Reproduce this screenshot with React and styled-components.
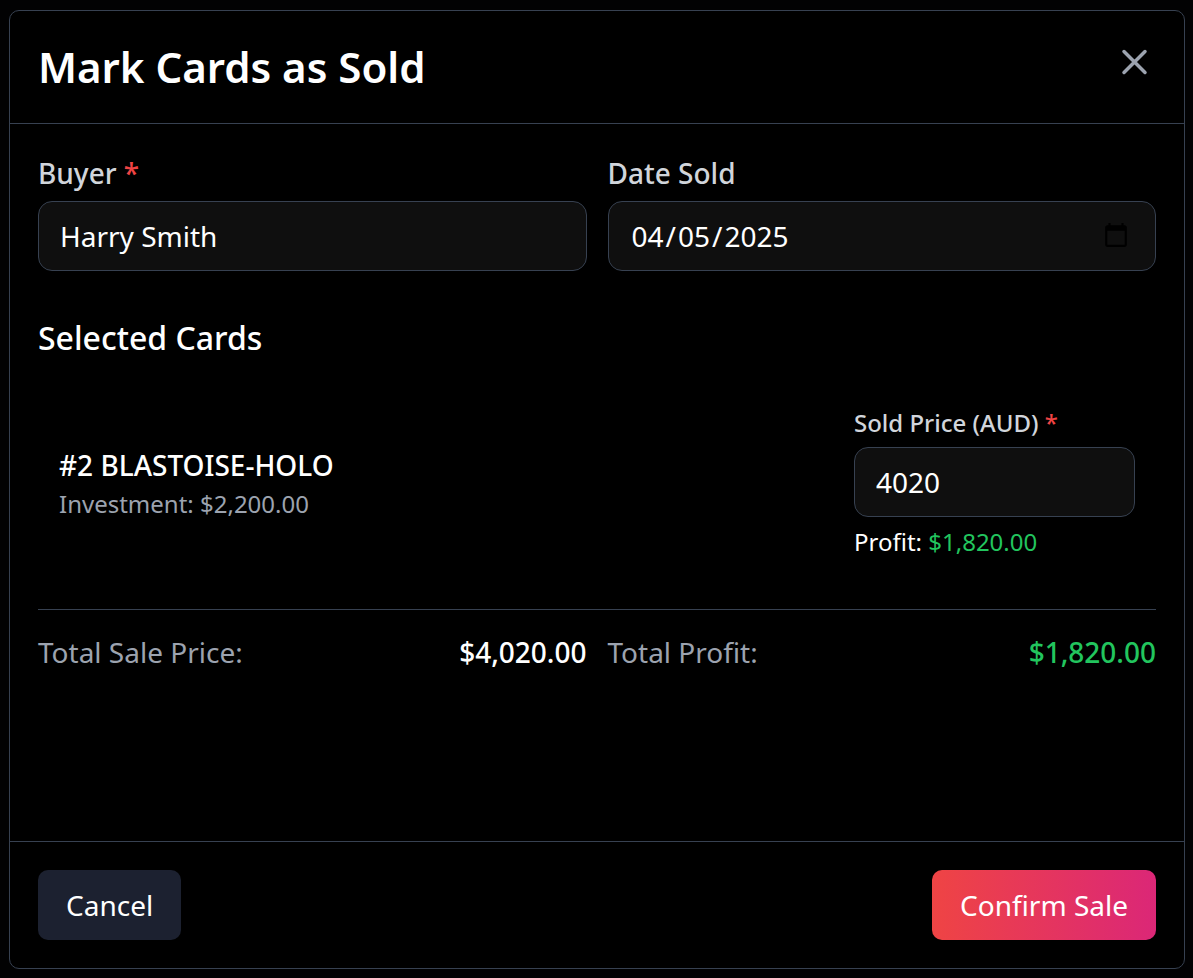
import React, { useState } from "react";
import styled, { createGlobalStyle } from "styled-components";

const GlobalStyle = createGlobalStyle`
  *, *::before, *::after { box-sizing: border-box; }
  html, body, #root { height: 100%; }
  body {
    margin: 0;
    background: #020203;
    color: #fff;
    font-family: "Noto Sans", sans-serif;
    font-size: 28px;
    line-height: 42px;
  }
  h2, h3, p, dl, dt, dd { margin: 0; }
  button, input { font: inherit; color: inherit; }
`;

const Page = styled.main`
  min-height: 100%;
  display: flex;
  padding: 10px 8px 9px 9px;
`;

const Dialog = styled.form`
  flex: 1;
  min-width: 0;
  display: flex;
  flex-direction: column;
  background: #000;
  border: 1px solid #374151;
  border-radius: 10px;
`;

const Header = styled.header`
  display: flex;
  justify-content: space-between;
  align-items: flex-start;
  padding: 28px;
  border-bottom: 1px solid #374151;
`;

const Title = styled.h2`
  font-size: 42px;
  line-height: 56px;
  font-weight: 600;
`;

const CloseButton = styled.button`
  display: flex;
  padding: 2px 0;
  border: 0;
  background: none;
  color: #9ca3af;
  cursor: pointer;
`;

const Body = styled.div`
  flex: 1;
  display: flex;
  flex-direction: column;
  padding: 28px;
`;

const Columns = styled.div`
  display: grid;
  grid-template-columns: 1fr 1fr;
  gap: 21px;
`;

const Field = styled.div`
  display: flex;
  flex-direction: column;
`;

const Label = styled.label`
  color: #d1d5db;
  font-size: ${(p) => (p.$small ? "24px" : "28px")};
  line-height: ${(p) => (p.$small ? "35px" : "42px")};
  font-weight: 500;
  margin-bottom: 7px;
`;

const Required = styled.span`
  color: #ef4444;
`;

const Input = styled.input`
  width: 100%;
  height: 70px;
  padding: 0 21px;
  border: 1px solid #374151;
  border-radius: 14px;
  background: #0f0f0f;
  outline: none;
`;

const DateInput = styled(Input)`
  &::-webkit-datetime-edit-month-field,
  &::-webkit-datetime-edit-day-field,
  &::-webkit-datetime-edit-year-field {
    padding: 0 2px;
  }
  &::-webkit-calendar-picker-indicator {
    margin-right: 2px;
  }
`;

const SectionTitle = styled.h3`
  margin-top: 42px;
  font-size: 32px;
  line-height: 50px;
  font-weight: 500;
`;

const CardRow = styled.article`
  display: flex;
  justify-content: space-between;
  align-items: center;
  margin-top: 21px;
  padding: 21px;
`;

const CardName = styled.p`
  font-weight: 500;
`;

const Investment = styled.p`
  color: #9ca3af;
  font-size: 24px;
  line-height: 35px;
`;

const PriceColumn = styled.div`
  width: 281px;
`;

const Profit = styled.p`
  margin-top: 7px;
  font-size: 24px;
  line-height: 36px;
`;

const Gain = styled.span`
  color: #22c55e;
`;

const Totals = styled.dl`
  display: grid;
  grid-template-columns: 1fr 1fr;
  gap: 21px;
  margin-top: 28px;
  padding-top: 21px;
  border-top: 1px solid #374151;
`;

const Total = styled.div`
  display: flex;
  justify-content: space-between;
  dt { color: #9ca3af; }
  dd { font-weight: 500; }
`;

const Footer = styled.footer`
  display: flex;
  justify-content: space-between;
  padding: 28px;
  border-top: 1px solid #374151;
`;

const Button = styled.button`
  height: 70px;
  padding: 0 28px;
  border: 0;
  border-radius: 10px;
  background: ${(p) => (p.$primary ? "linear-gradient(to right, #ef4444, #db2777)" : "#1c2130")};
  cursor: pointer;
`;

export default function App() {
  const [buyer, setBuyer] = useState("Harry Smith");
  const [date, setDate] = useState("2025-04-05");
  const [price, setPrice] = useState("4020");
  return (
    <>
      <GlobalStyle />
      <Page>
        <Dialog role="dialog" aria-labelledby="title" onSubmit={(e) => e.preventDefault()}>
          <Header>
            <Title id="title">Mark Cards as Sold</Title>
            <CloseButton type="button" aria-label="Close">
              <svg width="42" height="42" viewBox="0 0 42 42" fill="none" stroke="currentColor" strokeWidth="3.5" strokeLinecap="round">
                <path d="M10 10.5l21 21M31 10.5l-21 21" />
              </svg>
            </CloseButton>
          </Header>
          <Body>
            <Columns>
              <Field>
                <Label htmlFor="buyer">Buyer <Required>*</Required></Label>
                <Input id="buyer" value={buyer} onChange={(e) => setBuyer(e.target.value)} />
              </Field>
              <Field>
                <Label htmlFor="date">Date Sold</Label>
                <DateInput id="date" type="date" value={date} onChange={(e) => setDate(e.target.value)} />
              </Field>
            </Columns>
            <SectionTitle>Selected Cards</SectionTitle>
            <CardRow>
              <div>
                <CardName>#2 BLASTOISE-HOLO</CardName>
                <Investment>Investment: $2,200.00</Investment>
              </div>
              <PriceColumn>
                <Field>
                  <Label $small htmlFor="price">Sold Price (AUD) <Required>*</Required></Label>
                  <Input id="price" inputMode="decimal" value={price} onChange={(e) => setPrice(e.target.value)} />
                </Field>
                <Profit>Profit: <Gain>$1,820.00</Gain></Profit>
              </PriceColumn>
            </CardRow>
            <Totals>
              <Total><dt>Total Sale Price:</dt><dd>$4,020.00</dd></Total>
              <Total><dt>Total Profit:</dt><dd><Gain>$1,820.00</Gain></dd></Total>
            </Totals>
          </Body>
          <Footer>
            <Button type="button">Cancel</Button>
            <Button type="submit" $primary>Confirm Sale</Button>
          </Footer>
        </Dialog>
      </Page>
    </>
  );
}
